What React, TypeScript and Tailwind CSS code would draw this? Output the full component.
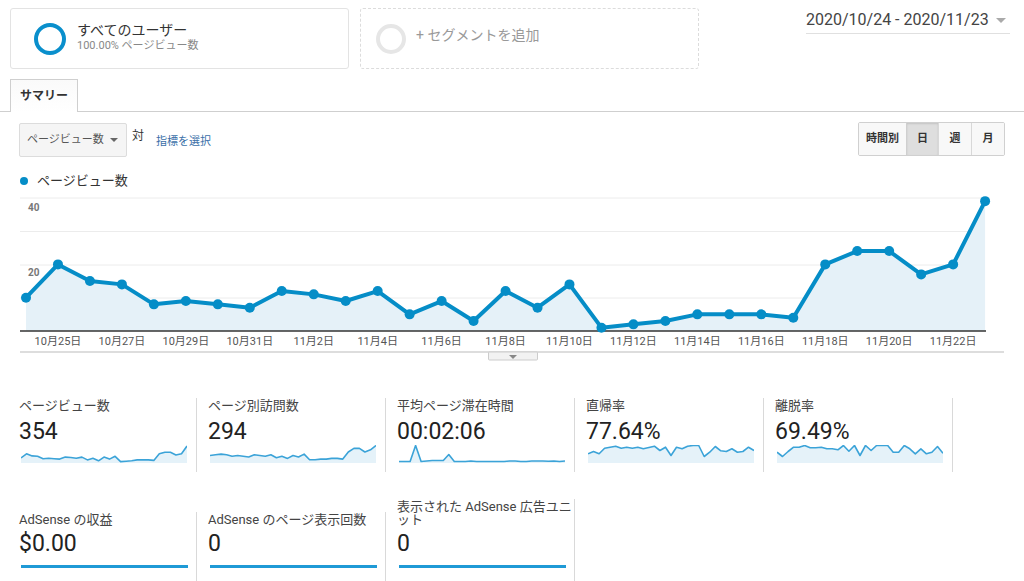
import { ReactNode } from "react";

// daily page views 10/24 - 11/23
const PV = [10, 20, 15, 14, 8, 9, 8, 7, 12, 11, 9, 12, 5, 9, 3, 12, 7, 14, 1, 2, 3, 5, 5, 5, 4, 20, 24, 24, 17, 20, 39];
const SESSIONS = [9, 10, 11, 10, 8, 9, 8, 7, 10, 9, 8, 10, 6, 8, 5, 9, 7, 11, 3, 3, 4, 4, 5, 5, 4, 14, 19, 19, 14, 17, 23];
// avg time / bounce / exit: offsets from top (px) of a 17px sparkline
const AVG_TIME = [16, 16, 16, 0, 16, 15.5, 15, 15, 15, 9, 16, 16, 16, 15.5, 16, 16, 16, 16, 16, 16, 15.5, 15.5, 16, 16, 15.5, 15.5, 15.5, 15.8, 15.5, 16, 15.5];
const BOUNCE = [8.3, 6, 8.3, 2.7, 1.7, 0.7, 2.7, 1.7, 2.7, 1.7, 3.3, 2, 0.7, 5, 1.7, 10, 1.7, 3.3, 0.7, 0, 0, 11, 6.7, 1, 5.3, 6, 3.3, 6.7, 6, 1.7, 5];
const EXIT = [6.7, 11, 6, 1.7, 1.7, 0, 2.3, 2.3, 1.7, 3.3, 3.3, 4.3, 0, 5.7, 0, 10, 0, 5, 0, 0, 0, 6.7, 6.7, 0, 3.3, 8.3, 3.3, 8.3, 6.7, 1, 7.7];

const BLUE = "#058dc7";
const X0 = 26;
const STEP = 31.97;
const px = (i: number) => X0 + i * STEP;
const py = (v: number) => 331 - v * 3.33;

const XLABELS = [
  "10月25日", "10月27日", "10月29日", "10月31日", "11月2日", "11月4日", "11月6日", "11月8日",
  "11月10日", "11月12日", "11月14日", "11月16日", "11月18日", "11月20日", "11月22日",
];

const MainChart = () => {
  const pts = PV.map((v, i) => `${px(i)},${py(v)}`).join(" ");
  const area = `${px(0)},331 ${pts} ${px(30)},331`;
  return (
    <svg width={1024} height={172} viewBox="0 190 1024 172" className="block">
      {[198, 231.5, 265, 298].map((y) => (
        <line key={y} x1={20} x2={985} y1={y} y2={y} stroke="#ececec" strokeWidth={1} />
      ))}
      <polygon points={area} fill="#e5f1f8" />
      <line x1={20} x2={986} y1={331} y2={331} stroke="#333" strokeWidth={1.5} />
      <text x={28} y={211} fontSize={10} fontWeight={700} fill="#777">40</text>
      <text x={28} y={276} fontSize={10} fontWeight={700} fill="#777">20</text>
      <polyline points={pts} fill="none" stroke={BLUE} strokeWidth={4} strokeLinejoin="round" />
      {PV.map((v, i) => (
        <circle key={i} cx={px(i)} cy={py(v)} r={5} fill={BLUE} />
      ))}
      {XLABELS.map((l, k) => (
        <text key={l} x={px(1 + k * 2)} y={345} fontSize={11} fill="#555" textAnchor="middle">
          {l}
        </text>
      ))}
      <line x1={20} x2={1004} y1={352} y2={352} stroke="#ddd" strokeWidth={2} />
      <rect x={488.5} y={352} width={49} height={8} fill="#f2f2f2" stroke="#ccc" strokeWidth={1} rx={1} />
      <polygon points="509,355 517,355 513,359" fill="#888" />
    </svg>
  );
};

const Spark = ({ offsets }: { offsets: number[] }) => {
  const w = 166;
  const s = w / (offsets.length - 1);
  const pts = offsets.map((o, i) => `${(i * s).toFixed(1)},${(o + 0.5).toFixed(1)}`).join(" ");
  return (
    <svg width={w} height={18} className="block ml-[2px]">
      <polygon points={`0,18 ${pts} ${w},18`} fill="#e5f2f9" />
      <polyline points={pts} fill="none" stroke="#3ba3d8" strokeWidth={1.6} strokeLinejoin="round" />
    </svg>
  );
};

const Metric = ({ label, value, children }: { label: string; value: string; children: ReactNode }) => (
  <div className="w-[189px] h-[74px] border-r border-[#d9d9d9] pl-[11px]">
    <div className="text-[13px] leading-[15px] text-[#444]">{label}</div>
    <div className="mt-[6px] text-[23px] leading-[26px] text-[#222]">{value}</div>
    {children}
  </div>
);

const AdMetric = ({ label, value }: { label: ReactNode; value: string }) => (
  <div className="w-[189px] border-r border-[#d9d9d9] pl-[11px] pt-[1px] pb-[20px]">
    <div className="text-[13px] leading-[13px] text-[#444]">{label}</div>
    <div className="mt-[5px] text-[23px] leading-[26px] text-[#222]">{value}</div>
    <div className="mt-[8px] ml-[2px] w-[167px] h-[3px] bg-[#1f9ad6]" />
  </div>
);

export default function App() {
  const pvOff = PV.map((v) => 16.5 - v * 0.41);
  const sessOff = SESSIONS.map((v) => 16.5 - v * (16.5 / 23));
  return (
    <div className="w-[1024px] h-[581px] overflow-hidden bg-white text-[#333] font-[family-name:Roboto,'Noto_Sans_CJK_JP',sans-serif]">
      {/* segments + date */}
      <div className="flex pt-[8px]">
        <div className="ml-[10px] w-[339px] h-[61px] rounded-[3px] border border-[#e3e3e3] flex items-center">
          <div className="ml-[23px] w-[32px] h-[32px] rounded-full border-[4px] border-[#0a8fcc]" />
          <div className="ml-[11px] -mt-[3px]">
            <div className="text-[14px] leading-[17px] text-[#333]">すべてのユーザー</div>
            <div className="text-[11px] leading-[13px] text-[#888]">100.00% ページビュー数</div>
          </div>
        </div>
        <div className="ml-[11px] w-[339px] h-[61px] rounded-[3px] border border-dashed border-[#dcdcdc] flex items-center">
          <div className="ml-[15px] w-[30px] h-[30px] rounded-full border-[4px] border-[#e6e6e6]" />
          <div className="ml-[10px] -mt-[6px] text-[14px] text-[#999]">+ セグメントを追加</div>
        </div>
        <div className="ml-[107px] mt-[2px] w-[204px] h-[24px] border-b border-[#e0e0e0] flex items-start">
          <span className="text-[16px] leading-[20px] text-[#444]">2020/10/24 - 2020/11/23</span>
          <span className="ml-auto mr-[4px] mt-[8px] w-0 h-0 border-l-[5px] border-r-[5px] border-t-[5px] border-l-transparent border-r-transparent border-t-[#aaa]" />
        </div>
      </div>

      {/* tabs */}
      <div className="mt-[10px] h-[33px] border-b border-[#cfcfcf] flex items-end">
        <div className="ml-[10px] w-[68px] h-[33px] -mb-px border border-b-0 border-[#cfcfcf] bg-gradient-to-b from-[#fafafa] to-white flex items-center justify-center">
          <span className="text-[12px] font-bold text-[#333]">サマリー</span>
        </div>
      </div>

      {/* controls */}
      <div className="mt-[11px] h-[34px] flex items-start">
        <div className="ml-[19px] w-[108px] h-[34px] rounded-[2px] border border-[#dcdcdc] bg-[#f5f5f5] flex items-center">
          <span className="ml-[7px] whitespace-nowrap text-[11px] text-[#555]">ページビュー数</span>
          <span className="ml-auto mr-[8px] w-0 h-0 border-l-[4px] border-r-[4px] border-t-[4px] border-l-transparent border-r-transparent border-t-[#666]" />
        </div>
        <span className="ml-[5px] mt-[5px] text-[12px] leading-[16px] text-[#333]">対</span>
        <span className="ml-[12px] mt-[11px] text-[11px] leading-[16px] text-[#3a6fa8]">指標を選択</span>
        <div className="ml-auto mr-[19px] -mt-px h-[34px] flex rounded-[2px] border border-[#d0d0d0] overflow-hidden text-[11px] font-bold text-[#333]">
          <div className="w-[47px] bg-[#f8f8f8] flex items-center justify-center">時間別</div>
          <div className="w-[32px] bg-[#dedede] border-l border-[#cfcfcf] shadow-[inset_0_1px_2px_rgba(0,0,0,0.12)] flex items-center justify-center">日</div>
          <div className="w-[33px] bg-[#f8f8f8] border-l border-[#d8d8d8] flex items-center justify-center">週</div>
          <div className="w-[33px] bg-[#f8f8f8] border-l border-[#d8d8d8] flex items-center justify-center">月</div>
        </div>
      </div>

      {/* legend */}
      <div className="mt-[16px] h-[16px] flex items-center">
        <span className="ml-[20px] w-[8px] h-[8px] rounded-full bg-[#058dc7]" />
        <span className="ml-[9px] text-[13px] leading-[16px] text-[#333]">ページビュー数</span>
      </div>

      <div className="mt-[1px]">
        <MainChart />
      </div>

      {/* metrics */}
      <div className="mt-[36px] ml-[8px] flex">
        <Metric label="ページビュー数" value="354">
          <Spark offsets={pvOff} />
        </Metric>
        <Metric label="ページ別訪問数" value="294">
          <Spark offsets={sessOff} />
        </Metric>
        <Metric label="平均ページ滞在時間" value="00:02:06">
          <Spark offsets={AVG_TIME} />
        </Metric>
        <Metric label="直帰率" value="77.64%">
          <Spark offsets={BOUNCE} />
        </Metric>
        <Metric label="離脱率" value="69.49%">
          <Spark offsets={EXIT} />
        </Metric>
      </div>

      <div className="mt-[27px] ml-[8px] flex items-end">
        <AdMetric label="AdSense の収益" value="$0.00" />
        <AdMetric label="AdSense のページ表示回数" value="0" />
        <AdMetric
          label={
            <>
              表示された AdSense 広告ユニ
              <br />
              ット
            </>
          }
          value="0"
        />
      </div>
    </div>
  );
}
